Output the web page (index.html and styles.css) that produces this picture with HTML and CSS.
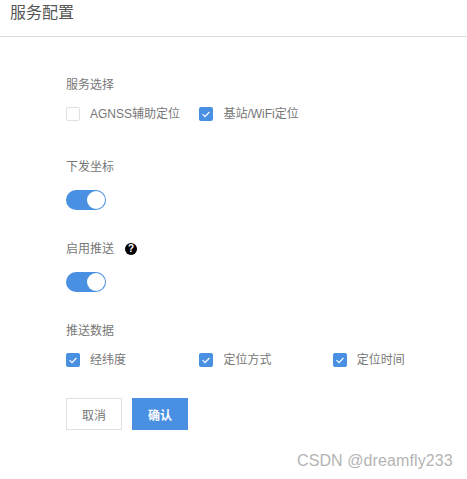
FILE: index.html
```html
<!DOCTYPE html>
<html lang="en">
<head>
  <meta charset="UTF-8">
  <title>服务配置</title>
  <link rel="stylesheet" href="styles.css">
</head>
<body>

<div class="header">服务配置</div>

<div class="form">
  <!-- 服务选择 -->
  <div class="label">服务选择</div>
  <div class="checkRow">
    <div class="check off"><span class="box"></span>AGNSS辅助定位</div>
    <div class="check"><span class="box"><svg viewBox="0 0 14 14"><path d="M3.6 7.2l2.4 2.4 4.4-4.6"/></svg></span>基站/WiFi定位</div>
  </div>

  <!-- 下发坐标 -->
  <div class="label gapWide">下发坐标</div>
  <div class="toggle"><span class="knob"></span></div>

  <!-- 启用推送 -->
  <div class="label gapTop helpLabel">启用推送
    <svg class="help" viewBox="0 0 12 12"><circle cx="6" cy="6" r="6"/><text x="6" y="9.4" text-anchor="middle">?</text></svg>
  </div>
  <div class="toggle"><span class="knob"></span></div>

  <!-- 推送数据 -->
  <div class="label gapTop">推送数据</div>
  <div class="checkRow">
    <div class="check"><span class="box"><svg viewBox="0 0 14 14"><path d="M3.6 7.2l2.4 2.4 4.4-4.6"/></svg></span>经纬度</div>
    <div class="check"><span class="box"><svg viewBox="0 0 14 14"><path d="M3.6 7.2l2.4 2.4 4.4-4.6"/></svg></span>定位方式</div>
    <div class="check"><span class="box"><svg viewBox="0 0 14 14"><path d="M3.6 7.2l2.4 2.4 4.4-4.6"/></svg></span>定位时间</div>
  </div>

  <div class="actions">
    <button class="btn">取消</button>
    <button class="btn primary">确认</button>
  </div>
</div>

<div class="watermark">CSDN @dreamfly233</div>

</body>
</html>
```

FILE: styles.css
```css
body {
  margin: 0;
  width: 467px;
  height: 479px;
  position: relative;
  overflow: hidden;
  background: #fff;
  font-family: "Liberation Sans", "Noto Sans CJK SC", sans-serif;
  color: #777;
}

.header {
  height: 36px;
  padding-left: 10px;
  border-bottom: 1px solid #ddd;
  font-size: 16px;
  line-height: 26px;
  color: #555;
}

.form {
  padding: 39px 0 0 66px;
}

.label {
  font-size: 12px;
  line-height: 18px;
  color: #777;
}

.gapWide { margin-top: 35px; }
.gapTop { margin-top: 30px; }

.helpLabel {
  display: flex;
  align-items: center;
  gap: 11px;
}

.help {
  width: 12px;
  height: 12px;
  fill: #000;
}

.help text {
  fill: #fff;
  font-size: 10px;
  font-weight: bold;
}

.checkRow {
  display: flex;
  margin-top: 11px;
  height: 18px;
}

.check {
  display: flex;
  align-items: center;
  width: 133.4px;
  font-size: 12px;
  line-height: 18px;
  color: #777;
}

.box {
  width: 14px;
  height: 14px;
  margin-right: 10px;
  border-radius: 2px;
  background: #4a90e2;
  flex: none;
}

.box svg {
  display: block;
  width: 14px;
  height: 14px;
  fill: none;
  stroke: #fff;
  stroke-width: 1.2;
}

.off .box {
  box-sizing: border-box;
  background: #fff;
  border: 1px solid #dfe1e6;
}

.toggle {
  width: 40px;
  height: 20px;
  margin-top: 14px;
  border-radius: 10px;
  background: #4a90e2;
  display: flex;
  justify-content: flex-end;
  align-items: center;
  padding-right: 1px;
  box-sizing: border-box;
}

.knob {
  width: 18px;
  height: 18px;
  border-radius: 50%;
  background: #fff;
}

.actions {
  display: flex;
  gap: 10px;
  margin-top: 29px;
}

.btn {
  width: 56px;
  height: 32px;
  box-sizing: border-box;
  border: 1px solid #dfe1e6;
  background: #fff;
  color: #777;
  font-family: inherit;
  font-size: 12px;
  padding: 0;
}

.primary {
  border: none;
  background: #4a90e2;
  color: #fff;
  font-weight: bold;
}

.watermark {
  position: absolute;
  left: 297px;
  top: 451px;
  font-size: 16px;
  line-height: 20px;
  color: #b4b4b4;
  font-family: "Liberation Sans", sans-serif;
  letter-spacing: 0.1px;
}
```
